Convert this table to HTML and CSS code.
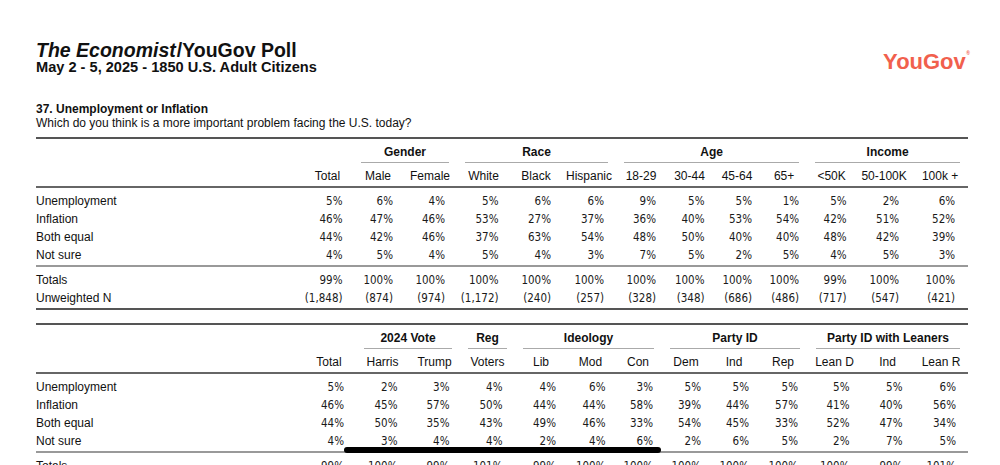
FILE: index.html
```html
<!DOCTYPE html>
<html lang="en">
<head>
<meta charset="utf-8">
<title>The Economist/YouGov Poll</title>
<link rel="stylesheet" href="styles.css">
</head>
<body>
<div class="page">
  <header class="top">
    <div class="titles">
      <h1 class="title"><em>The Economist</em>/YouGov Poll</h1>
      <p class="sub">May 2 - 5, 2025 - 1850 U.S. Adult Citizens</p>
    </div>
    <div class="logo">YouGov<span class="reg">®</span></div>
  </header>

  <section class="q">
    <h2 class="qt">37. Unemployment or Inflation</h2>
    <p class="qx">Which do you think is a more important problem facing the U.S. today?</p>

    <table class="xt">
      <colgroup>
        <col class="w266"><col class="w51"><col class="w50"><col class="w54"><col class="w53"><col class="w52"><col class="w54"><col class="w50"><col class="w47"><col class="w48"><col class="w46"><col class="w49"><col class="w56"><col class="w56">
      </colgroup>
      <thead>
        <tr class="grp">
          <th></th><th></th>
          <th colspan="2"><div class="gl">Gender</div></th>
          <th colspan="3"><div class="gl">Race</div></th>
          <th colspan="4"><div class="gl">Age</div></th>
          <th colspan="3"><div class="gl">Income</div></th>
        </tr>
        <tr class="hd">
          <th></th><th>Total</th><th>Male</th><th>Female</th><th>White</th><th>Black</th><th>Hispanic</th><th>18-29</th><th>30-44</th><th>45-64</th><th>65+</th><th>&lt;50K</th><th>50-100K</th><th>100k +</th>
        </tr>
      </thead>
      <tbody class="resp">
        <tr><td class="lab">Unemployment</td><td class="n"><span class="v">5%</span></td><td class="n"><span class="v">6%</span></td><td class="n"><span class="v">4%</span></td><td class="n"><span class="v">5%</span></td><td class="n"><span class="v">6%</span></td><td class="n"><span class="v">6%</span></td><td class="n"><span class="v">9%</span></td><td class="n"><span class="v">5%</span></td><td class="n"><span class="v">5%</span></td><td class="n"><span class="v">1%</span></td><td class="n"><span class="v">5%</span></td><td class="n"><span class="v">2%</span></td><td class="n"><span class="v">6%</span></td></tr>
        <tr><td class="lab">Inflation</td><td class="n"><span class="v">46%</span></td><td class="n"><span class="v">47%</span></td><td class="n"><span class="v">46%</span></td><td class="n"><span class="v">53%</span></td><td class="n"><span class="v">27%</span></td><td class="n"><span class="v">37%</span></td><td class="n"><span class="v">36%</span></td><td class="n"><span class="v">40%</span></td><td class="n"><span class="v">53%</span></td><td class="n"><span class="v">54%</span></td><td class="n"><span class="v">42%</span></td><td class="n"><span class="v">51%</span></td><td class="n"><span class="v">52%</span></td></tr>
        <tr><td class="lab">Both equal</td><td class="n"><span class="v">44%</span></td><td class="n"><span class="v">42%</span></td><td class="n"><span class="v">46%</span></td><td class="n"><span class="v">37%</span></td><td class="n"><span class="v">63%</span></td><td class="n"><span class="v">54%</span></td><td class="n"><span class="v">48%</span></td><td class="n"><span class="v">50%</span></td><td class="n"><span class="v">40%</span></td><td class="n"><span class="v">40%</span></td><td class="n"><span class="v">48%</span></td><td class="n"><span class="v">42%</span></td><td class="n"><span class="v">39%</span></td></tr>
        <tr><td class="lab">Not sure</td><td class="n"><span class="v">4%</span></td><td class="n"><span class="v">5%</span></td><td class="n"><span class="v">4%</span></td><td class="n"><span class="v">5%</span></td><td class="n"><span class="v">4%</span></td><td class="n"><span class="v">3%</span></td><td class="n"><span class="v">7%</span></td><td class="n"><span class="v">5%</span></td><td class="n"><span class="v">2%</span></td><td class="n"><span class="v">5%</span></td><td class="n"><span class="v">4%</span></td><td class="n"><span class="v">5%</span></td><td class="n"><span class="v">3%</span></td></tr>
      </tbody>
      <tbody class="tot">
        <tr><td class="lab">Totals</td><td class="n"><span class="v">99%</span></td><td class="n"><span class="v">100%</span></td><td class="n"><span class="v">100%</span></td><td class="n"><span class="v">100%</span></td><td class="n"><span class="v">100%</span></td><td class="n"><span class="v">100%</span></td><td class="n"><span class="v">100%</span></td><td class="n"><span class="v">100%</span></td><td class="n"><span class="v">100%</span></td><td class="n"><span class="v">100%</span></td><td class="n"><span class="v">99%</span></td><td class="n"><span class="v">100%</span></td><td class="n"><span class="v">100%</span></td></tr>
        <tr><td class="lab">Unweighted N</td><td class="n"><span class="v">(1,848)</span></td><td class="n"><span class="v">(874)</span></td><td class="n"><span class="v">(974)</span></td><td class="n"><span class="v">(1,172)</span></td><td class="n"><span class="v">(240)</span></td><td class="n"><span class="v">(257)</span></td><td class="n"><span class="v">(328)</span></td><td class="n"><span class="v">(348)</span></td><td class="n"><span class="v">(686)</span></td><td class="n"><span class="v">(486)</span></td><td class="n"><span class="v">(717)</span></td><td class="n"><span class="v">(547)</span></td><td class="n"><span class="v">(421)</span></td></tr>
      </tbody>
    </table>

    <table class="xt xt2">
      <colgroup>
        <col class="w266"><col class="w54"><col class="w53"><col class="w51"><col class="w55"><col class="w52"><col class="w47"><col class="w48"><col class="w48"><col class="w48"><col class="w50"><col class="w53"><col class="w53"><col class="w54">
      </colgroup>
      <thead>
        <tr class="grp">
          <th></th><th></th>
          <th colspan="2"><div class="gl">2024 Vote</div></th>
          <th><div class="gl">Reg</div></th>
          <th colspan="3"><div class="gl">Ideology</div></th>
          <th colspan="3"><div class="gl">Party ID</div></th>
          <th colspan="3"><div class="gl">Party ID with Leaners</div></th>
        </tr>
        <tr class="hd">
          <th></th><th>Total</th><th>Harris</th><th>Trump</th><th>Voters</th><th>Lib</th><th>Mod</th><th>Con</th><th>Dem</th><th>Ind</th><th>Rep</th><th>Lean D</th><th>Ind</th><th>Lean R</th>
        </tr>
      </thead>
      <tbody class="resp">
        <tr><td class="lab">Unemployment</td><td class="n"><span class="v">5%</span></td><td class="n"><span class="v">2%</span></td><td class="n"><span class="v">3%</span></td><td class="n"><span class="v">4%</span></td><td class="n"><span class="v">4%</span></td><td class="n"><span class="v">6%</span></td><td class="n"><span class="v">3%</span></td><td class="n"><span class="v">5%</span></td><td class="n"><span class="v">5%</span></td><td class="n"><span class="v">5%</span></td><td class="n"><span class="v">5%</span></td><td class="n"><span class="v">5%</span></td><td class="n"><span class="v">6%</span></td></tr>
        <tr><td class="lab">Inflation</td><td class="n"><span class="v">46%</span></td><td class="n"><span class="v">45%</span></td><td class="n"><span class="v">57%</span></td><td class="n"><span class="v">50%</span></td><td class="n"><span class="v">44%</span></td><td class="n"><span class="v">44%</span></td><td class="n"><span class="v">58%</span></td><td class="n"><span class="v">39%</span></td><td class="n"><span class="v">44%</span></td><td class="n"><span class="v">57%</span></td><td class="n"><span class="v">41%</span></td><td class="n"><span class="v">40%</span></td><td class="n"><span class="v">56%</span></td></tr>
        <tr><td class="lab">Both equal</td><td class="n"><span class="v">44%</span></td><td class="n"><span class="v">50%</span></td><td class="n"><span class="v">35%</span></td><td class="n"><span class="v">43%</span></td><td class="n"><span class="v">49%</span></td><td class="n"><span class="v">46%</span></td><td class="n"><span class="v">33%</span></td><td class="n"><span class="v">54%</span></td><td class="n"><span class="v">45%</span></td><td class="n"><span class="v">33%</span></td><td class="n"><span class="v">52%</span></td><td class="n"><span class="v">47%</span></td><td class="n"><span class="v">34%</span></td></tr>
        <tr><td class="lab">Not sure</td><td class="n"><span class="v">4%</span></td><td class="n"><span class="v">3%</span></td><td class="n"><span class="v">4%</span></td><td class="n"><span class="v">4%</span></td><td class="n"><span class="v">2%</span></td><td class="n"><span class="v">4%</span></td><td class="n"><span class="v">6%</span></td><td class="n"><span class="v">2%</span></td><td class="n"><span class="v">6%</span></td><td class="n"><span class="v">5%</span></td><td class="n"><span class="v">2%</span></td><td class="n"><span class="v">7%</span></td><td class="n"><span class="v">5%</span></td></tr>
      </tbody>
      <tbody class="tot">
        <tr><td class="lab">Totals</td><td class="n"><span class="v">99%</span></td><td class="n"><span class="v">100%</span></td><td class="n"><span class="v">99%</span></td><td class="n"><span class="v">101%</span></td><td class="n"><span class="v">99%</span></td><td class="n"><span class="v">100%</span></td><td class="n"><span class="v">100%</span></td><td class="n"><span class="v">100%</span></td><td class="n"><span class="v">100%</span></td><td class="n"><span class="v">100%</span></td><td class="n"><span class="v">100%</span></td><td class="n"><span class="v">99%</span></td><td class="n"><span class="v">101%</span></td></tr>
      </tbody>
    </table>
  </section>
</div>
<div class="smudge"></div>
</body>
</html>
```

FILE: styles.css
```css
html, body {
  margin: 0;
  padding: 0;
  background: #fff;
  overflow: hidden;
}

body {
  font-family: "Liberation Sans", Arial, sans-serif;
  font-size: 12px;
  color: #111;
}

.page {
  padding: 40px 32px 0 36px;
}

.top {
  display: flex;
  justify-content: space-between;
  align-items: flex-start;
}

.title {
  margin: 0;
  font-size: 19.5px;
  line-height: 20px;
  font-weight: bold;
}

.title em {
  font-style: italic;
  margin-right: 1px;
}

.sub {
  margin: 0;
  font-size: 14.6px;
  line-height: 14px;
  font-weight: bold;
}

.logo {
  margin-top: 11px;
  margin-right: -2px;
  font-size: 22px;
  line-height: 22px;
  font-weight: bold;
  color: #f1604d;
}

.reg {
  font-size: 5px;
  line-height: 5px;
  vertical-align: top;
  margin-left: 0.5px;
}

.q {
  margin-top: 28px;
}

.qt {
  margin: 0;
  font-size: 12px;
  line-height: 14px;
  font-weight: bold;
}

.qx {
  margin: 0;
  font-size: 12px;
  line-height: 14px;
}

.xt {
  margin-top: 7px;
  width: 932px;
  table-layout: fixed;
  border-collapse: separate;
  border-spacing: 0;
  border-top: 2px solid #555;
  border-bottom: 2px solid #555;
}

.xt2 {
  margin-top: 13px;
}

.w46 { width: 46px; }
.w47 { width: 47px; }
.w48 { width: 48px; }
.w49 { width: 49px; }
.w50 { width: 50px; }
.w51 { width: 51px; }
.w52 { width: 52px; }
.w53 { width: 53px; }
.w54 { width: 54px; }
.w55 { width: 55px; }
.w56 { width: 56px; }
.w266 { width: 266px; }

.xt th,
.xt td {
  padding: 0;
}

.grp th {
  padding: 5px 8px 0;
  font-weight: bold;
  line-height: 16px;
}

.gl {
  padding-bottom: 2px;
  border-bottom: 1px solid #aaa;
  text-align: center;
  white-space: nowrap;
}

.hd th {
  padding: 5px 0 2px;
  font-weight: normal;
  line-height: 16px;
  text-align: center;
  white-space: nowrap;
  border-bottom: 2px solid #666;
}

.xt td {
  line-height: 18px;
}

.xt td.lab {
  text-align: left;
  white-space: nowrap;
}

.xt td.n {
  text-align: center;
  font-family: "DejaVu Sans Condensed", "DejaVu Sans", sans-serif;
  font-stretch: condensed;
  font-size: 11.5px;
  color: #1a1a1a;
}

.v {
  display: inline-flex;
  justify-content: flex-end;
  width: 30px;
  white-space: nowrap;
}

.resp tr:first-child td,
.tot tr:first-child td {
  padding-top: 4px;
}

.resp tr:last-child td {
  padding-bottom: 1px;
  border-bottom: 2px solid #999;
}

.tot tr:last-child td {
  padding-bottom: 1px;
}

.smudge {
  position: absolute;
  left: 344px;
  top: 447px;
  width: 317px;
  height: 6px;
  border-radius: 3px;
  background: #000;
}
```
